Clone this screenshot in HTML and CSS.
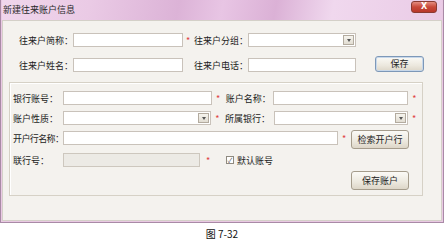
FILE: index.html
```html
<!DOCTYPE html>
<html lang="zh-CN">
<head>
  <meta charset="UTF-8" />
  <title>新建往来账户信息</title>
  <link rel="stylesheet" href="styles.css">
</head>
<body>
  <div class="window">
    <div class="titlebar">
      <span class="title">新建往来账户信息</span>
      <button class="close">X</button>
    </div>
    <div class="content">
      <div class="top">
        <div class="row row-1">
          <label class="lbl">往来户简称：</label>
          <input class="field w-name" type="text" />
          <span class="req">*</span>
          <label class="lbl">往来户分组：</label>
          <div class="select w-group"><span class="arrow"></span></div>
        </div>
        <div class="row row-2">
          <label class="lbl">往来户姓名：</label>
          <input class="field w-name" type="text" />
          <span class="req"></span>
          <label class="lbl">往来户电话：</label>
          <input class="field w-group" type="text" />
          <button class="btn btn-save focus">保存</button>
        </div>
      </div>
      <div class="group">
        <div class="grow g-1">
          <label class="glbl">银行账号：</label>
          <input class="field w-acc" type="text" />
          <span class="greq">*</span>
          <label class="glbl2">账户名称：</label>
          <input class="field w-bank" type="text" />
          <span class="greq">*</span>
        </div>
        <div class="grow g-2">
          <label class="glbl">账户性质：</label>
          <div class="select w-acc"><span class="arrow"></span></div>
          <span class="greq">*</span>
          <label class="glbl2">所属银行：</label>
          <div class="select w-bank"><span class="arrow"></span></div>
          <span class="greq">*</span>
        </div>
        <div class="grow g-3">
          <label class="glbl">开户行名称：</label>
          <input class="field w-branch" type="text" />
          <span class="greq short">*</span>
          <button class="btn btn-search">检索开户行</button>
        </div>
        <div class="grow g-4">
          <label class="glbl">联行号：</label>
          <input class="field w-code" type="text" disabled />
          <span class="greq wide">*</span>
          <label class="check"><span class="box">✓</span>默认账号</label>
        </div>
        <div class="grow g-5">
          <button class="btn btn-account">保存账户</button>
        </div>
      </div>
    </div>
  </div>
  <p class="caption">图 7-32</p>
</body>
</html>
```

FILE: styles.css
```css
* {
  margin: 0;
  padding: 0;
  box-sizing: border-box;
  font-family: "Noto Sans CJK SC", "Liberation Sans", sans-serif;
}
body {
  background: #fff;
  width: 444px;
  height: 241px;
  overflow: hidden;
}
.window {
  width: 444px;
  height: 223px;
  border: 1px solid #a98aa6;
  border-top: none;
  background: #e9c9e3;
  padding: 0 1px 1px 1px;
  display: flex;
  flex-direction: column;
}
.titlebar {
  height: 20px;
  display: flex;
  align-items: center;
  justify-content: space-between;
  padding: 0 5px 0 1px;
  background: linear-gradient(100deg, #f0d6ec 0%, #eacae5 20%, #dcb3d7 40%, #e8c5e4 50%, #dbb1d6 62%, #f0d8ee 75%, #eacbe6 100%);
}
.title {
  font-size: 9px;
  color: #2a2a2a;
  line-height: 12px;
  margin-top: -1px;
}
.close {
  width: 26px;
  height: 12px;
  margin-top: -6px;
  border: 1px solid #8a3a32;
  border-radius: 3px;
  background: linear-gradient(#e48b80, #c9483a 50%, #b8372a);
  color: #fff;
  font-size: 8px;
  font-weight: bold;
  line-height: 10px;
  font-family: "DejaVu Sans", sans-serif;
}
.content {
  flex: 1;
  background: #f4f2ee;
  border: 1px solid #d4d0c8;
}
.top {
  padding: 11px 0 0 16px;
}
.row {
  display: flex;
  align-items: center;
  height: 16px;
}
.row-2 {
  margin-top: 9px;
}
.lbl {
  width: 54px;
  font-size: 9px;
  color: #222;
  padding-top: 1px;
  white-space: nowrap;
}
.field {
  height: 14px;
  border: 1px solid #c9c2ba;
  background: #fff;
  outline: none;
}
.field:disabled {
  background: #eceae5;
  border-color: #cdc7be;
}
.w-name { width: 110px; }
.w-group { width: 108px; }
.req {
  width: 11px;
  color: #e04040;
  font-size: 9px;
  padding-left: 3px;
  line-height: 9px;
}
.select {
  height: 14px;
  border: 1px solid #c9c2ba;
  background: #fff;
  display: flex;
  justify-content: flex-end;
  padding: 1px;
}
.arrow {
  width: 11px;
  height: 10px;
  border: 1px solid #b3ab9f;
  background: linear-gradient(#f6f4ee, #e2ddd2);
  position: relative;
}
.arrow::after {
  content: "";
  position: absolute;
  left: 3px;
  top: 3px;
  border-left: 2px solid transparent;
  border-right: 2px solid transparent;
  border-top: 3px solid #555;
}
.btn {
  height: 16px;
  border: 1px solid #a59c8c;
  border-radius: 3px;
  background: linear-gradient(#fbfaf6, #ece8de 60%, #ddd6c8);
  font-size: 9px;
  color: #222;
  white-space: nowrap;
}
.btn-save {
  width: 49px;
  margin-left: 19px;
  margin-top: -3px;
  border-color: #7d98b8;
  box-shadow: inset 0 0 0 1px #c8d8ea;
}
.group {
  margin: 9px 18px 0 6px;
  height: 114px;
  border: 1px solid #d6d1c6;
  box-shadow: 1px 1px 0 #fff inset;
  padding: 8px 0 0 3px;
}
.grow {
  display: flex;
  align-items: center;
  height: 14px;
}
.g-2, .g-3 { margin-top: 6px; }
.g-4 { margin-top: 8px; }
.g-5 { margin-top: 4px; justify-content: flex-end; padding-right: 13px; height: 19px; }
.glbl {
  width: 50px;
  flex-shrink: 0;
  font-size: 9px;
  color: #222;
  white-space: nowrap;
}
.g-3 .glbl {
  letter-spacing: -0.6px;
}
.glbl2 {
  width: 49px;
  font-size: 9px;
  color: #222;
  white-space: nowrap;
}
.w-acc { width: 149px; }
.w-bank { width: 135px; }
.w-branch { width: 275px; }
.w-code { width: 137px; }
.greq {
  width: 14px;
  color: #e04040;
  font-size: 9px;
  padding-left: 4px;
  line-height: 9px;
}
.greq.short { width: 13px; }
.greq.wide { width: 26px; padding-left: 6px; }
.btn-search {
  width: 58px;
  height: 19px;
  margin-top: 3px;
}
.btn-account {
  width: 58px;
  height: 19px;
}
.check {
  display: flex;
  align-items: center;
  font-size: 9px;
  color: #222;
  gap: 3px;
}
.box {
  width: 8px;
  height: 8px;
  border: 1px solid #8f8a80;
  background: #fff;
  font-size: 7px;
  line-height: 6px;
  color: #666;
  text-align: center;
}
.caption {
  text-align: center;
  font-size: 10px;
  color: #111;
  margin-top: 4px;
  line-height: 14px;
}
```
